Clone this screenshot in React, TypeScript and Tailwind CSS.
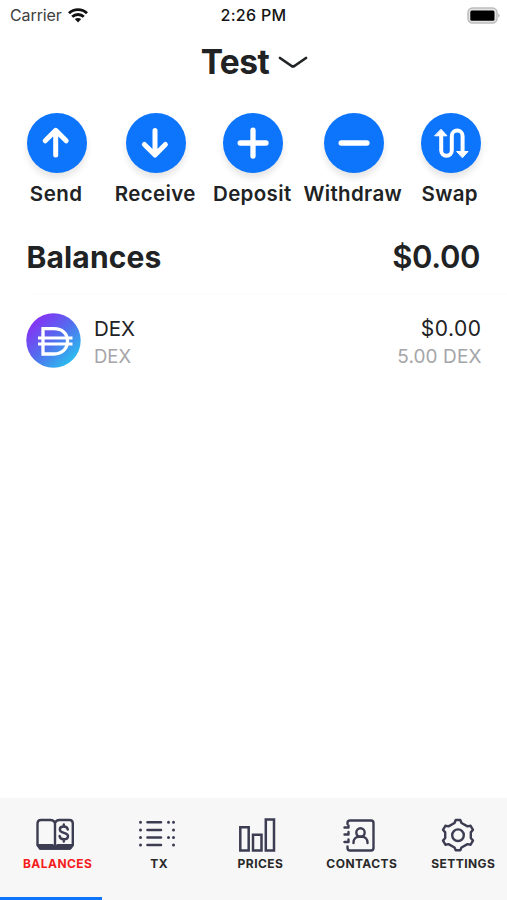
import React from "react";

function Wifi() {
  return (
    <svg width="20" height="15" viewBox="0 0 20 15" fill="none" stroke="#111" strokeWidth="2.9">
      <path d="M1 5.2C6 .4 14 .4 19 5.2" />
      <path d="M4.2 8.8c3.3-3.1 8.3-3.1 11.6 0" />
      <path d="M6.8 11.1c1.8-1.6 4.6-1.6 6.4 0L10 14.6Z" fill="#111" stroke="none" />
    </svg>
  );
}

function Battery() {
  return (
    <svg width="33" height="17" viewBox="0 0 33 17">
      <rect x="1" y="1" width="29" height="15" rx="4.5" fill="#e4e4e4" stroke="#bdbdbd" strokeWidth="1.5" />
      <rect x="3.3" y="3.5" width="24.2" height="10.3" rx="1.5" fill="#000" />
      <path d="M31.3 6.5v4c1.6-.6 1.6-3.4 0-4Z" fill="#aaa" />
    </svg>
  );
}

const stroke = {
  fill: "none",
  stroke: "white",
  strokeLinecap: "round" as const,
  strokeLinejoin: "round" as const,
};

const actions = [
  { label: "Send", text: "tracking-[0.5px]", icon: <path d="M28.7 42V18M18.2 27.8 28.7 17.4 39.2 27.8" strokeWidth="5" /> },
  { label: "Receive", text: "tracking-[0.4px]", icon: <path d="M29 17.5V41M18.4 31.5 29 42 39.4 31.5" strokeWidth="5" /> },
  { label: "Deposit", text: "tracking-[0.35px]", icon: <path d="M17.2 30H43M30 17.2V43" strokeWidth="5.3" /> },
  { label: "Withdraw", text: "tracking-[0.35px]", icon: <path d="M17.3 30H42.8" strokeWidth="5.6" /> },
  {
    label: "Swap",
    text: "tracking-[0.3px]",
    icon: (
      <g>
        <path d="M20.2 21V37.5a5.3 5.3 0 0 0 10.6 0V23a5.4 5.4 0 0 1 10.8 0V39" strokeWidth="4" strokeLinecap="butt" />
        <path d="M20.2 16.5 26 22.8H14ZM41.6 44.5 47 38.5H36Z" fill="white" strokeWidth="1" />
      </g>
    ),
  },
];

function Dai() {
  return (
    <svg width="55" height="55" viewBox="0 0 55 55">
      <defs>
        <linearGradient id="coin" x1=".1" y1=".1" x2=".85" y2=".9">
          <stop stopColor="#8b2cf5" />
          <stop offset=".5" stopColor="#546bee" />
          <stop offset="1" stopColor="#28c0ee" />
        </linearGradient>
      </defs>
      <circle cx="27.5" cy="27.5" r="27.2" fill="url(#coin)" />
      <g fill="none" stroke="#fff">
        <path d="M17 15.7H28C36 15.7 41.5 20.2 41.5 28S36 41 28 41H17Z" strokeWidth="3.3" />
        <path d="M12 25H46.5M12 31H46.5" strokeWidth="2.8" />
      </g>
    </svg>
  );
}

const navItems = [
  {
    label: "BALANCES",
    color: "text-[#f51c20]",
    shift: "-left-[2.5px]",
    icon: (
      <g>
        <path d="M20 7C19 4.5 17.8 4 15.5 4H6Q2.5 4 2.5 7.5V29l2.7 3.5H35L37.8 29V7.5Q37.8 4 34.5 4H24.5Q21 4 20 7V28" />
        <path d="M3 29.3H17.5L20 30.5 22.5 29.3H37.5L35 32.5H5.2Z" fill="#3c3c52" />
        <path d="M32.8 13.5c-.4-2-1.8-3-4-3-2.5 0-4 1.2-4 3 0 4.5 8.2 2.1 8.2 6.5 0 2-1.6 3.3-4.1 3.3s-4-1.2-4.3-3.3M28.8 8.5V10.5M28.8 23.5V25.5" />
      </g>
    ),
  },
  {
    label: "TX",
    color: "text-[#292929]",
    shift: "-left-[2.5px]",
    icon: (
      <g>
        <path d="M10.5 6.2H24M10.5 14H24M10.5 21.5H24M10.5 29H24" strokeWidth="2.6" />
        <path d="M3.5 6.2h.01M3.5 14h.01M3.5 21.5h.01M3.5 29h.01M31.5 6.2h.01M31.5 21.5h.01M36.5 6.2h.01M36.5 14h.01M36.5 21.5h.01M36.5 29h.01" strokeWidth="3" />
      </g>
    ),
  },
  {
    label: "PRICES",
    color: "text-[#292929]",
    shift: "-left-[3px]",
    icon: <path d="M3.3 11.2H11.7V34.5H3.3ZM16 18.8H24.5V34.5H16ZM28.8 3.4H37V34.5H28.8Z" strokeLinejoin="miter" strokeWidth="2.5" />,
  },
  {
    label: "CONTACTS",
    color: "text-[#292929]",
    shift: "-left-[2px]",
    icon: (
      <g>
        <path d="M7.5 8V7Q7.5 4.5 10 4.5H31Q33.5 4.5 33.5 7V32Q33.5 34.5 31 34.5H10Q7.5 34.5 7.5 32V30.5M4.5 11.5H8.5V9.5M4.5 18.5H8.5V16M4.5 26H8.5V23.5" />
        <circle cx="20.5" cy="16.5" r="4.2" />
        <path d="M13.5 27v-.5c0-3.5 2.5-5.8 5.5-5.8h3c3 0 5.5 2.3 5.5 5.8v.5" />
      </g>
    ),
  },
  {
    label: "SETTINGS",
    color: "text-[#292929]",
    shift: "-left-[5.5px]",
    icon: (
      <g strokeWidth="2.4">
        <path d="M17.7 4H22.3L23.5 7 29.5 10.4 32.6 9.8 35 13.8 32.8 16.4V22L35 24.6 32.6 28.7 29.5 28.1 23.5 31.5 22.3 34.3H17.7L16.5 31.5 10.5 28.1 7.4 28.7 5 24.6 7.2 22V16.4L5 13.8 7.4 9.8 10.5 10.4 16.5 7Z" />
        <circle cx="20" cy="19.2" r="5.8" />
      </g>
    ),
  },
];

export default function App() {
  return (
    <div className="flex h-[900px] w-[507px] flex-col overflow-hidden bg-white font-['Inter','Liberation_Sans',sans-serif] text-[#202224]">
      <header className="grid h-[30px] grid-cols-3 items-center px-2.5 text-[16px]">
        <div className="flex items-center gap-[6px] text-[#404040]">
          <span className="tracking-[-0.1px]">Carrier</span>
          <Wifi />
        </div>
        <div className="text-center font-medium tracking-[0.3px] text-[#151515]">2:26 PM</div>
        <div className="-mr-[3px] flex justify-end">
          <Battery />
        </div>
      </header>

      <div className="flex h-16 items-center justify-center gap-[9px] pl-[2px]">
        <h1 className="pt-[2px] text-[33.5px] leading-none font-bold tracking-[-0.5px]">Test</h1>
        <svg width="30" height="16" viewBox="0 0 30 16" fill="none" stroke="#202224" strokeWidth="2.7" strokeLinecap="round" strokeLinejoin="round">
          <path d="M2 4 13.6 12Q15 12.8 16.4 12L28 4" />
        </svg>
      </div>

      <div className="grid grid-cols-[104px_94px_100px_101px_93px] pt-[18.5px] pl-[5px]">
        {actions.map((a) => (
          <div key={a.label} className="flex flex-col items-center">
            <div className="h-[60px] w-[60px] rounded-full bg-[#0c75fc] shadow-[0_5px_6px_rgba(0,0,0,0.1)]">
              <svg width="60" height="60" viewBox="0 0 60 60" {...stroke}>{a.icon}</svg>
            </div>
            <div className={`mt-[7px] -ml-[1.5px] text-[20.5px] leading-7 font-semibold ${a.text}`}>{a.label}</div>
          </div>
        ))}
      </div>

      <div className="mt-[21.5px] flex h-[56px] items-center justify-between pr-[27px] pl-[26.5px]">
        <h2 className="text-[30px] font-bold tracking-[0.15px]">Balances</h2>
        <span className="text-[31px] font-semibold tracking-[-0.4px]">$0.00</span>
      </div>
      <div className="mt-2 ml-8 h-px bg-[#fbfbfb]" />

      <div className="mt-[18.5px] flex items-start pr-[25.5px] pl-[26px]">
        <Dai />
        <div className="mt-[2px] ml-[13px] flex flex-col">
          <span className="text-[20.5px] leading-[28px]">DEX</span>
          <span className="text-[18.5px] leading-[27px] text-[#a5a5a8]">DEX</span>
        </div>
        <div className="mt-[2px] ml-auto flex flex-col text-right">
          <span className="text-[21px] leading-[28px] tracking-[0.5px]">$0.00</span>
          <span className="text-[19px] leading-[27px] tracking-[0.1px] text-[#a5a5a8]">5.00 DEX</span>
        </div>
      </div>

      <nav className="mt-auto h-[102px] bg-[#f7f7f7]">
        <div className="grid h-[99px] grid-cols-[repeat(5,101.4px)] pt-[18px] pl-[7px]">
          {navItems.map((n) => (
            <div key={n.label} className="flex flex-col items-center">
              <div className={`relative ${n.shift}`}>
                <svg width="40" height="38" viewBox="0 0 40 38" fill="none" stroke="#3c3c52" strokeWidth="2.4" strokeLinecap="round" strokeLinejoin="round">
                  {n.icon}
                </svg>
              </div>
              <span className={`mt-[2px] text-[12px] leading-4 font-bold tracking-[0.45px] whitespace-nowrap ${n.color}`}>{n.label}</span>
            </div>
          ))}
        </div>
        <div className="h-[3px] w-[102px] bg-[#0c75fc]" />
      </nav>
    </div>
  );
}
